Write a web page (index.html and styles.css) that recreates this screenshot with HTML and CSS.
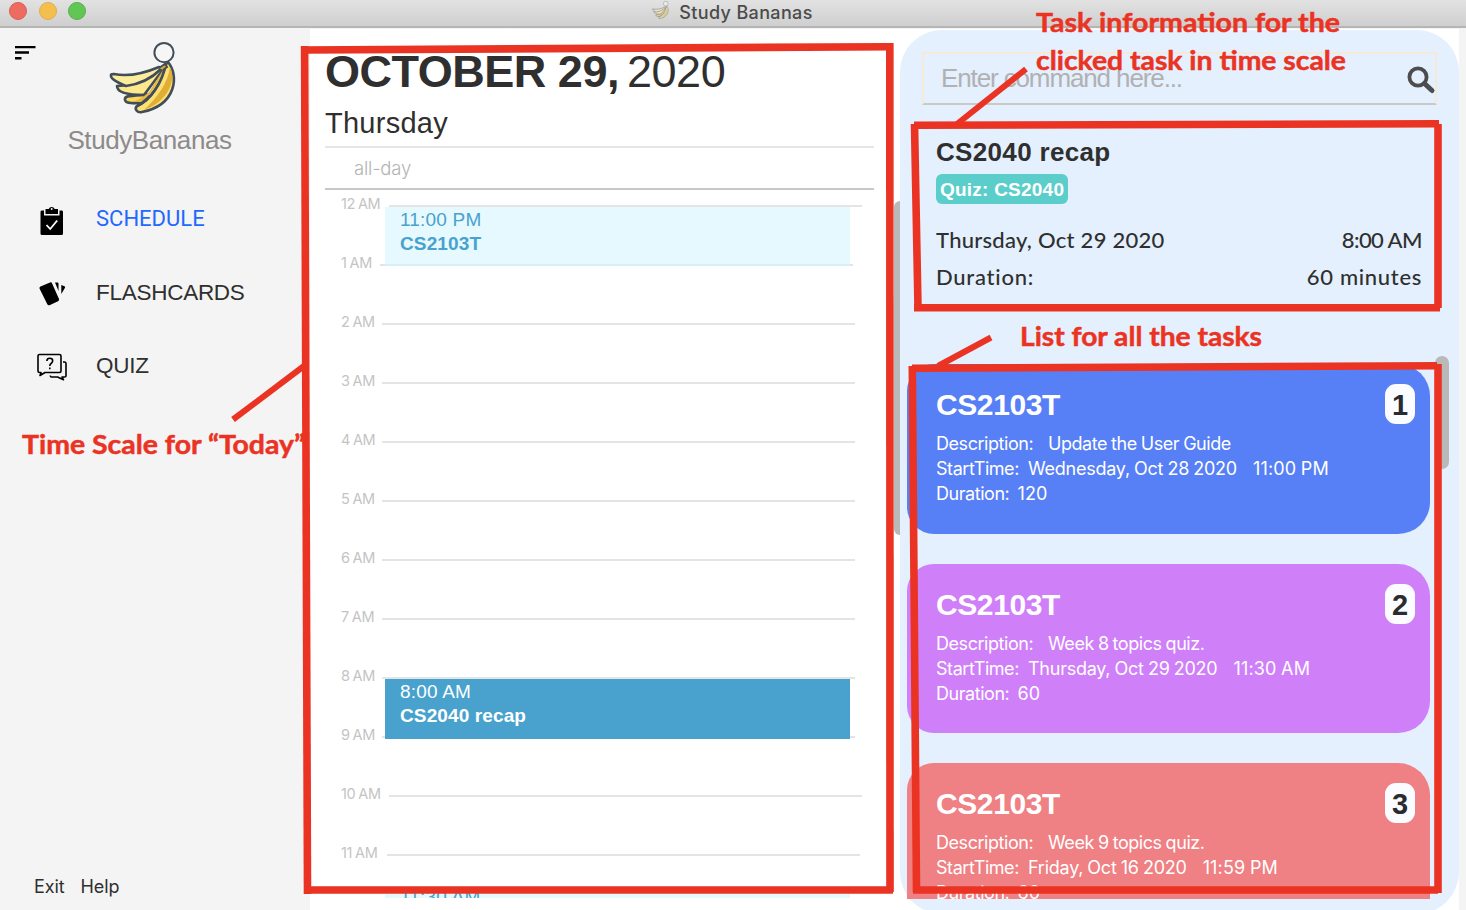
FILE: index.html
```html
<!DOCTYPE html>
<html lang="en">
<head>
<meta charset="utf-8">
<title>Study Bananas</title>
<link rel="stylesheet" href="styles.css">
</head>
<body>
<svg width="0" height="0" class="defs" aria-hidden="true">
  <symbol id="bananas" viewBox="0 0 100 85">
    <g stroke="#414e5a" stroke-width="2.6" stroke-linejoin="round" stroke-linecap="round">
      <path d="M31 64C36 71 48 68 54 61L50 58C43 61 37 60 31 62Z" fill="#e8b93f"/>
      <path d="M22 51C22 57 32 60 49 60L55 52L70 32L60 36C48 47 36 50 23 51Z" fill="#fde88c"/>
      <path d="M16 40C15 44 26 49 31 51C46 49 58 42 66 34L64 32C50 38 34 42 19 39Q16 39 16 40Z" fill="#fdec9e"/>
      <path d="M49 60C34 61 29 61 30 65C31 69 37 68 45 68" fill="#fdd85a"/>
      <path d="M73 27C84 40 82 70 47 77C42 78 39 74 42 71C56 65 66 48 70 30Z" fill="#fddf72"/>
    </g>
    <path d="M75 32C82 46 72 67 49 75C62 63 73 48 75 32Z" fill="#dfae36"/>
    <path d="M68 35L54 57L48 62L40 66L46 67C58 58 66 46 68 35Z" fill="#e8b93f"/>
    <path d="M71 29C67 48 56 65 42 71" fill="none" stroke="#414e5a" stroke-width="2.6"/>
    <path d="M64 33l6-4 2 3-4 3" fill="#dfae36" stroke="#414e5a" stroke-width="2"/>
    <circle cx="69" cy="17.600" r="9.600" fill="#f6f6f7" stroke="#414e5a" stroke-width="2"/>
  </symbol>
</svg>
<div class="window">
  <header class="titlebar">
    <div class="lights"><i class="light red"></i><i class="light yellow"></i><i class="light green"></i></div>
    <div class="title"><svg class="title-icon" viewBox="10 5 76 76"><use href="#bananas" width="100" height="85"/></svg><span>Study Bananas</span></div>
  </header>
  <div class="content">
    <aside class="sidebar">
      <svg class="menu" width="22" height="14" viewBox="0 0 22 14"><path d="M0 1h20.500M0 6.500h14M0 12.200h6.500" stroke="#000" stroke-width="2.400"/></svg>
      <div class="brand">
        <svg width="100" height="85" viewBox="0 0 100 85"><use href="#bananas" width="100" height="85"/></svg>
        <span>StudyBananas</span>
      </div>
      <nav class="nav">
        <a class="nav-item active">
          <svg width="32" height="32" viewBox="0 0 32 32"><path fill="#000" d="M5.500 6.500H8v5h15.500v-5H26Q27 6.500 27 8V29.500q0 1.500-1.500 1.500H6Q4.500 31 4.500 29.500V8Q4.500 6.500 5.500 6.500ZM9.500 5H12.700a3.200 3.200 0 0 1 6 0H22v5H9.500Z"/><circle cx="15.700" cy="5" r="1" fill="#f4f4f4"/><path d="M10.500 21l3.700 4 7-8.500" fill="none" stroke="#fff" stroke-width="1.800"/></svg>
          <span>SCHEDULE</span>
        </a>
        <a class="nav-item">
          <svg width="32" height="32" viewBox="0 0 32 32"><path fill="#000" d="M4.500 8.500L14 4.500q1.500-.5 2 .8L23 21q.500 1.500-1 2.200L13.500 27.200q-1.500.5-2.200-1L3.500 10.500Q3.200 9 4.500 8.500ZM19 4.500h2.500q1 0 1 1V13ZM25.300 7l3.200 1.300q1 .5.500 1.500L25.300 16Z"/></svg>
          <span class="flash">FLASHCARDS</span>
        </a>
        <a class="nav-item">
          <svg width="32" height="32" viewBox="0 0 32 32" fill="none" stroke="#000" stroke-width="1.600" stroke-linejoin="round"><path d="M3.500 3.500h20q1.500 0 1.500 1.500v15q0 1.500-1.500 1.500H9L4 24.500l1-3H3.500Q2 21.500 2 20V5Q2 3.500 3.500 3.500ZM27 11h1.500q1.500 0 1.500 1.500V25q0 1-1.500 1H26l1.500 2.800-6-2.800h-6q-1.200 0-1.200-1.500"/><path d="M10.800 10q.2-2.700 3-2.700t2.900 2.500q0 1.600-1.600 2.700-1.300.8-1.300 2.500M13.800 16.500v1.800"/></svg>
          <span class="flash">QUIZ</span>
        </a>
      </nav>
      <footer class="links"><span>Exit</span><span>Help</span></footer>
    </aside>

    <main class="schedule">
      <h1><b>OCTOBER 29,</b> <span>2020</span></h1>
      <h2>Thursday</h2>
      <div class="allday">all-day</div>
      <div class="timeline">
        <div class="hour l12"><span>12 AM</span><i></i></div>
        <div class="hour l1"><span>1 AM</span><i></i></div>
        <div class="hour"><span>2 AM</span><i></i></div>
        <div class="hour"><span>3 AM</span><i></i></div>
        <div class="hour"><span>4 AM</span><i></i></div>
        <div class="hour"><span>5 AM</span><i></i></div>
        <div class="hour"><span>6 AM</span><i></i></div>
        <div class="hour"><span>7 AM</span><i></i></div>
        <div class="hour"><span>8 AM</span><i></i></div>
        <div class="hour"><span>9 AM</span><i></i></div>
        <div class="hour l10"><span>10 AM</span><i></i></div>
        <div class="hour l11"><span>11 AM</span><i></i></div>
        <div class="event e1"><span>11:00 PM</span><b>CS2103T</b></div>
        <div class="event e2"><span>8:00 AM</span><b>CS2040 recap</b></div>
        <div class="event e3"><span>11:30 AM</span></div>
      </div>
      <div class="thumb left-thumb"></div>
    </main>

    <section class="panel">
      <div class="search"><span>Enter command here...</span>
        <svg width="30" height="30" viewBox="0 0 30 30" fill="none" stroke="#4d4d4d"><circle cx="12" cy="12" r="8.600" stroke-width="3.800"/><path d="M18.500 18.500l7.500 7" stroke-width="5" stroke-linecap="round"/></svg>
      </div>
      <div class="detail">
        <h3>CS2040 recap</h3>
        <span class="tag">Quiz: CS2040</span>
        <div class="row first"><span class="d1">Thursday, Oct 29 2020</span><span class="d2">8:00 AM</span></div>
        <div class="row"><span class="d3">Duration:</span><span class="d4">60 minutes</span></div>
      </div>
      <div class="tasks">
        <article class="task blue">
          <div class="head"><h4>CS2103T</h4><b class="num">1</b></div>
          <p><span class="k desc">Description:</span><span>Update the User Guide</span></p>
          <p><span class="k start">StartTime:</span><span class="date">Wednesday, Oct 28 2020</span><span class="time">11:00 PM</span></p>
          <p><span class="k dur">Duration:</span><span class="time">120</span></p>
        </article>
        <article class="task purple">
          <div class="head"><h4>CS2103T</h4><b class="num">2</b></div>
          <p><span class="k desc">Description:</span><span>Week 8 topics quiz.</span></p>
          <p><span class="k start">StartTime:</span><span class="date">Thursday, Oct 29 2020</span><span class="time">11:30 AM</span></p>
          <p><span class="k dur">Duration:</span><span class="time">60</span></p>
        </article>
        <article class="task coral">
          <div class="head"><h4>CS2103T</h4><b class="num">3</b></div>
          <p><span class="k desc">Description:</span><span>Week 9 topics quiz.</span></p>
          <p><span class="k start">StartTime:</span><span class="date">Friday, Oct 16 2020</span><span class="time">11:59 PM</span></p>
          <p><span class="k dur">Duration:</span><span class="time">60</span></p>
        </article>
      </div>
      <div class="thumb right-thumb"></div>
    </section>
  </div>

  <svg class="notes" width="1466" height="910" viewBox="0 0 1466 910">
    <g class="note-text">
      <text x="22" y="454" textLength="283" lengthAdjust="spacingAndGlyphs">Time Scale for “Today”</text>
      <text x="1036" y="32" textLength="304" lengthAdjust="spacingAndGlyphs">Task information for the</text>
      <text x="1036" y="70" textLength="310" lengthAdjust="spacingAndGlyphs">clicked task in time scale</text>
      <text x="1020" y="346" textLength="242" lengthAdjust="spacingAndGlyphs">List for all the tasks</text>
    </g>
    <g fill="none" stroke="#eb3323" stroke-width="7.600">
      <path d="M304 50L890 46.700"/><path d="M304.600 46L307.500 894"/><path d="M889.800 43L890 892"/><path d="M304 890H893"/>
      <path d="M914 125.300L1439 123.800"/><path d="M914.500 124L918 307"/><path d="M1438 124V308"/><path d="M914 307.800H1440"/>
      <path d="M912 368.200L1437 365.800"/><path d="M912.300 366L916.500 892"/><path d="M1438 364V893"/><path d="M913 890H1438"/>
      <g stroke-width="6"><path d="M233 419.500L304 366"/><path d="M1026 69L957 124"/><path d="M991 337.500L938 366"/></g>
    </g>
  </svg>
</div>
</body>
</html>
```
FILE: styles.css
```css
* { box-sizing: border-box; }
body { margin: 0; font-family: "Liberation Sans", Arial, sans-serif; color: #2f2f2f; font-variant-ligatures: none; }
h1, h2, h3, h4, p { margin: 0; }
.defs { position: absolute; }
.window { position: relative; width: 1466px; height: 910px; overflow: hidden; display: flex; flex-direction: column; background: #fff; }

.titlebar { position: relative; flex: 0 0 28px; background: linear-gradient(#e2e2e2, #cfcfcf); border-bottom: 2px solid #b5b5b5; display: flex; justify-content: center; }
.lights { position: absolute; left: 9px; top: 2px; display: flex; gap: 11.500px; }
.light { width: 18px; height: 18px; border-radius: 50%; }
.red { background: #ed6b60; border: 1px solid #d95f55; }
.yellow { background: #f5bf50; border: 1px solid #dfae48; }
.green { background: #62c655; border: 1px solid #57b04b; }
.title { display: flex; align-items: center; font: 500 18px Inter, sans-serif; color: #4b4b4b; height: 24px; padding-right: 2px; }
.title-icon { width: 19px; height: 20px; opacity: .5; margin-right: 9px; margin-top: -4px; }
.title span { letter-spacing: .35px; }

.content { flex: 1; display: flex; min-height: 0; border-top: 1px solid #f4f4f4; background: linear-gradient(90deg, #fff 1459px, #f4f4f4 1459px); }
.sidebar { width: 310px; background: #f4f4f4; display: flex; flex-direction: column; position: relative; }
.menu { position: absolute; left: 15px; top: 17px; }
.brand { display: flex; flex-direction: column; align-items: center; padding: 6px 11px 0 0; height: 155px; }
.brand svg { margin-right: 9px; flex: none; }
.brand span { font-size: 26px; line-height: 30px; margin-top: 5px; color: #8d8a89; letter-spacing: -.42px; }
.nav { display: flex; flex-direction: column; gap: 41.500px; padding-left: 36px; margin-top: 20px; }
.nav-item { display: flex; align-items: center; height: 32px; font-size: 22.500px; gap: 28px; }
.nav-item span { line-height: 26px; margin-top: -2px; }
.nav-item .flash { letter-spacing: -.27px; }
.active { color: #2368ff; font-family: Roboto, sans-serif; }
.nav-item.active { font-size: 22px; }
.links { margin-top: auto; padding: 0 0 12px 34px; display: flex; gap: 16px; font: 18px/22px Inter, sans-serif; letter-spacing: -.1px; }

.schedule { width: 590px; position: relative; padding: 0 15px; }
h1 { font-size: 45px; line-height: 50px; font-weight: 400; margin-top: 18px; white-space: nowrap; letter-spacing: -.48px; }
h1 span { margin-left: -4px; }
h2 { font-size: 29px; line-height: 34px; font-weight: 400; margin-top: 9px; letter-spacing: .25px; }
.allday { margin-top: 6px; width: 549px; height: 43.500px; border-top: 2px solid #e6e6e6; border-bottom: 2px solid #c8c8c8; padding-left: 29px; font: 300 18.500px/40px Inter, sans-serif; color: #b4b4b4; letter-spacing: -.2px; }
.timeline { position: relative; height: 708px; overflow: hidden; padding: .5px 0 0 16px; }
.hour { height: 59px; display: flex; align-items: flex-start; font: 400 14.500px/18px Inter, sans-serif; color: #c4c4c4; padding-top: 5px; }
.hour span { width: 41px; white-space: nowrap; letter-spacing: -.35px; word-spacing: -.8px; }
.hour i { width: 473px; height: 2px; background: #e4e4e4; margin-top: 10px; }
.l12 span, .l10 span { width: 47.500px; }
.l1 span { width: 39px; }
.l11 span { width: 45.500px; }
.event { position: absolute; left: 60px; width: 465px; height: 59px; padding: 1px 15px; font-size: 19px; line-height: 24px; display: flex; flex-direction: column; }
.event span { letter-spacing: .2px; }
.event b { letter-spacing: .12px; }
.e1 { top: 17px; background: #e5f9ff; color: #48a2cd; border-bottom: 2px solid #d9eff6; }
.e2 { top: 489px; height: 60px; background: #48a2cd; color: #fff; }
.e3 { top: 696px; background: #e5f9ff; color: #48a2cd; padding-top: 0; line-height: 22px; }
.thumb { position: absolute; background: #b9b9b9; }
.left-thumb { right: 0; top: 172px; width: 6px; height: 334px; border-radius: 6px 0 0 6px; }

.panel { position: relative; width: 559px; height: 884px; flex: none; margin-top: 1px; background: #e4f0fd; border-radius: 42px; padding: 22px 22px 0; }
.search { height: 53px; border: 2px solid #f5eada; border-bottom-color: #cbc9c5; display: flex; align-items: center; justify-content: space-between; padding: 0 0 0 17px; }
.search span { font-size: 26px; letter-spacing: -1.12px; color: #b1b1b3; }
.search svg { margin: 2px -1px 0 0; }
.detail { padding: 31px 15px 0 14px; height: 259px; }
h3 { font-size: 26px; line-height: 32px; letter-spacing: .33px; }
.tag { display: inline-block; height: 30px; margin-top: 6px; background: #5bcecb; border-radius: 6px; color: #fff; font-weight: bold; font-size: 19px; line-height: 31px; padding: 0 4px; letter-spacing: .23px; }
.row { display: flex; justify-content: space-between; font: 500 22px/37px Lato, sans-serif; }
.row.first { margin-top: 17px; }
.d1 { letter-spacing: .27px; }
.d2 { letter-spacing: -.55px; }
.d3 { letter-spacing: .75px; }
.d4 { letter-spacing: .68px; }
.tasks { margin: 0 0 0 -15px; width: 523px; height: 535px; overflow: hidden; display: flex; flex-direction: column; gap: 30px; }
.task { height: 169.500px; flex: none; border-radius: 27px 32px 32px 27px; padding: 19px 15px 0 29px; color: #fff; font: 18px/25px Inter, sans-serif; }
.head { display: flex; justify-content: space-between; align-items: flex-start; height: 48px; }
h4 { font: bold 30px/44px "Liberation Sans", sans-serif; letter-spacing: -.4px; }
.num { width: 30px; height: 40px; border-radius: 11px; background: #fbfcff; color: #292b2e; font: bold 29px/42px "Liberation Sans", sans-serif; text-align: center; margin-top: 1px; }
.task p { display: flex; white-space: pre; letter-spacing: -.45px; word-spacing: -.6px; }
.desc { width: 112px; }
.start { width: 92px; }
.dur { width: 81.500px; }
.task .date { letter-spacing: -.25px; margin-right: 16px; }
.task .time { letter-spacing: .15px; }
.blue { background: #5880f6; }
.purple { background: #cf80f9; }
.coral { background: #ef8083; }
.right-thumb { right: 10px; top: 326px; width: 14px; height: 113px; border-radius: 7px; }

.notes { position: absolute; left: 0; top: 0; pointer-events: none; }
.note-text { font: bold 27px Lato, Carlito, sans-serif; fill: #eb3323; stroke: #eb3323; stroke-width: .5px; }
```
